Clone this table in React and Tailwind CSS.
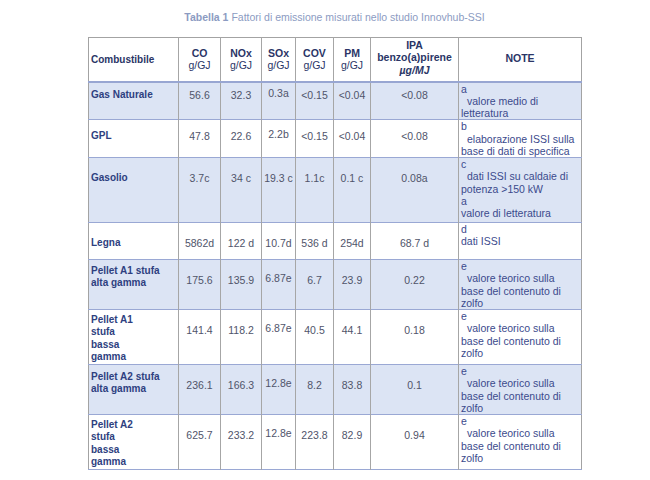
const cols = [90, 42, 41, 34, 38, 37, 88, 123];

// h = row height, p = top padding of value cells, lp = top padding of label cell
const rows = [
  { label: ['Gas Naturale'], v: ['56.6', '32.3', '0.3a', '<0.15', '<0.04', '<0.08'], up: true, h: 38, p: 6, lp: 6, blue: true,
    notes: [['a', false], ['valore medio di', true], ['letteratura', false]] },
  { label: ['GPL'], v: ['47.8', '22.6', '2.2b', '<0.15', '<0.04', '<0.08'], up: true, h: 37, p: 10, lp: 10,
    notes: [['b', false], ['elaborazione ISSI sulla', true], ['base di dati di specifica', false]] },
  { label: ['Gasolio'], v: ['3.7c', '34 c', '19.3 c', '1.1c', '0.1 c', '0.08a'], h: 65, p: 14, lp: 14, blue: true,
    notes: [['c', false], ['dati ISSI su caldaie di', true], ['potenza >150 kW', false], ['a', false], ['valore di letteratura', false]] },
  { label: ['Legna'], v: ['5862d', '122 d', '10.7d', '536 d', '254d', '68.7 d'], h: 37, p: 14, lp: 14,
    notes: [['d', false], ['dati ISSI', false]] },
  { label: ['Pellet A1 stufa', 'alta gamma'], v: ['175.6', '135.9', '6.87e', '6.7', '23.9', '0.22'], up: true, h: 50, p: 14, lp: 5, blue: true,
    notes: [['e', false], ['valore teorico sulla', true], ['base del contenuto di', false], ['zolfo', false]] },
  { label: ['Pellet A1', 'stufa', 'bassa', 'gamma'], v: ['141.4', '118.2', '6.87e', '40.5', '44.1', '0.18'], up: true, h: 55, p: 14, lp: 4,
    notes: [['e', false], ['valore teorico sulla', true], ['base del contenuto di', false], ['zolfo', false]] },
  { label: ['Pellet A2 stufa', 'alta gamma'], v: ['236.1', '166.3', '12.8e', '8.2', '83.8', '0.1'], up: true, h: 50, p: 14, lp: 6, blue: true,
    notes: [['e', false], ['valore teorico sulla', true], ['base del contenuto di', false], ['zolfo', false]] },
  { label: ['Pellet A2', 'stufa', 'bassa', 'gamma'], v: ['625.7', '233.2', '12.8e', '223.8', '82.9', '0.94'], up: true, h: 55, p: 14, lp: 4,
    notes: [['e', false], ['valore teorico sulla', true], ['base del contenuto di', false], ['zolfo', false]] },
];

const heads = [['CO'], ['NOx'], ['SOx'], ['COV'], ['PM']];

export default function App() {
  return (
    <div className="w-[650px] h-[480px] bg-white pt-[11px] font-['Liberation_Sans',Arial,sans-serif]">
      <div className="w-[493px] ml-[88px]">
        <p className="text-center text-[10.5px] leading-[13px] text-[#8c9bc2]">
          <span className="font-bold">Tabella 1</span> Fattori di emissione misurati nello studio Innovhub-SSI
        </p>

        <table className="mt-[13px] table-fixed border-collapse w-[493px] border border-[#a3a3a3]">
          <colgroup>
            {cols.map((w, i) => <col key={i} style={{ width: w }} />)}
          </colgroup>
          <thead>
            <tr className="h-[44px] border-b-2 border-[#98a6d2]">
              <th className="border-r border-[#a6a6a6] text-left pl-[2px] text-[10px] font-bold text-[#2a3566]">Combustibile</th>
              {heads.map(([h]) => (
                <th key={h} className="border-r border-[#a6a6a6] text-center text-[10.5px] leading-[12px] text-[#2a3566] align-middle">
                  <div className="font-bold">{h}</div>
                  <div className="font-normal">g/GJ</div>
                </th>
              ))}
              <th className="border-r border-[#a6a6a6] text-center text-[10.5px] leading-[12.5px] text-[#2a3566] font-bold align-middle pb-[4px]">
                <div>IPA</div>
                <div>benzo(a)pirene</div>
                <div className="italic">µg/MJ</div>
              </th>
              <th className="text-center text-[10.5px] font-bold text-[#2a3566]">NOTE</th>
            </tr>
          </thead>
          <tbody>
            {rows.map((r, ri) => (
              <tr key={ri} style={{ height: r.h }} className={`${r.blue ? 'bg-[#dce4f4]' : 'bg-white'} border-b border-[#9aa8d4]`}>
                <td className="border-r border-[#a6a6a6] align-top pl-[2px] text-[10px] leading-[12.25px] font-bold text-[#2e3f80]" style={{ paddingTop: r.lp }}>
                  {r.label.map((l) => <div key={l} className="whitespace-nowrap">{l}</div>)}
                </td>
                {r.v.map((v, i) => (
                  <td
                    key={i}
                    className="border-r border-[#a6a6a6] align-top text-center text-[10.5px] leading-[13px] text-[#50546a]"
                    style={{ paddingTop: i === 2 && r.up ? r.p - 2 : r.p }}
                  >
                    {v}
                  </td>
                ))}
                <td className="align-top pl-[2px] text-[10.5px] leading-[12.25px] text-[#3b4a8c]">
                  {r.notes.map(([t, indent], ni) => (
                    <div key={ni} className={`whitespace-nowrap ${indent ? 'pl-[6px]' : ''}`}>{t}</div>
                  ))}
                </td>
              </tr>
            ))}
          </tbody>
        </table>
      </div>
    </div>
  );
}
